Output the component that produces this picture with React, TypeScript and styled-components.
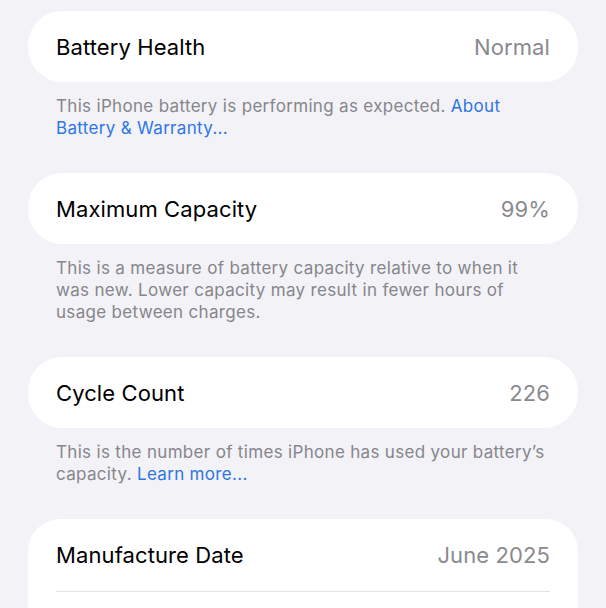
import React from "react";
import styled, { createGlobalStyle } from "styled-components";

const GlobalStyle = createGlobalStyle`
  html, body {
    margin: 0;
    padding: 0;
    background: #f2f2f7;
  }
  body {
    font-family: Inter, "Noto Sans", "Liberation Sans", sans-serif;
    -webkit-font-smoothing: antialiased;
  }
`;

const Page = styled.div`
  width: 606px;
  height: 608px;
  overflow: hidden;
  box-sizing: border-box;
  background: #f2f2f7;
  padding: 11px 28px 0 28px;
  display: flex;
  flex-direction: column;
`;

const Section = styled.section`
  display: flex;
  flex-direction: column;
`;

const Card = styled.div<{ $open?: boolean }>`
  background: #ffffff;
  border-radius: ${(p) => (p.$open ? "32px 32px 0 0" : "34px")};
  padding: 0 28px;
  display: flex;
  flex-direction: column;
`;

const Row = styled.div<{ $h: number }>`
  height: ${(p) => p.$h}px;
  display: flex;
  align-items: center;
  justify-content: space-between;
`;

const Label = styled.span`
  font-size: 22px;
  color: #000000;
  letter-spacing: 0.1px;
`;

const Value = styled.span`
  font-size: 22px;
  color: #8a8a8e;
  letter-spacing: 0.1px;
`;

const Separator = styled.div`
  height: 1px;
  background: #e2e2e6;
`;

const Footer = styled.p`
  margin: 0;
  padding: 13px 0 34px 28px;
  font-size: 17px;
  line-height: 22px;
  color: #86868b;
  letter-spacing: 0.32px;
  white-space: nowrap;
`;

const Link = styled.a`
  color: #2f76e2;
  text-decoration: none;
`;

export default function App() {
  return (
    <>
      <GlobalStyle />
      <Page>
        <Section>
          <Card>
            <Row $h={71}>
              <Label>Battery Health</Label>
              <Value>Normal</Value>
            </Row>
          </Card>
          <Footer>
            This iPhone battery is performing as expected. <Link>About</Link>
            <br />
            <Link>Battery &amp; Warranty...</Link>
          </Footer>
        </Section>
        <Section>
          <Card>
            <Row $h={71}>
              <Label>Maximum Capacity</Label>
              <Value>99%</Value>
            </Row>
          </Card>
          <Footer>
            This is a measure of battery capacity relative to when it
            <br />
            was new. Lower capacity may result in fewer hours of
            <br />
            usage between charges.
          </Footer>
        </Section>
        <Section>
          <Card>
            <Row $h={71}>
              <Label>Cycle Count</Label>
              <Value>226</Value>
            </Row>
          </Card>
          <Footer>
            This is the number of times iPhone has used your battery’s
            <br />
            capacity. <Link>Learn more...</Link>
          </Footer>
        </Section>
        <Section>
          <Card $open>
            <Row $h={72}>
              <Label>Manufacture Date</Label>
              <Value>June 2025</Value>
            </Row>
            <Separator />
            <Row $h={40} />
          </Card>
        </Section>
      </Page>
    </>
  );
}
